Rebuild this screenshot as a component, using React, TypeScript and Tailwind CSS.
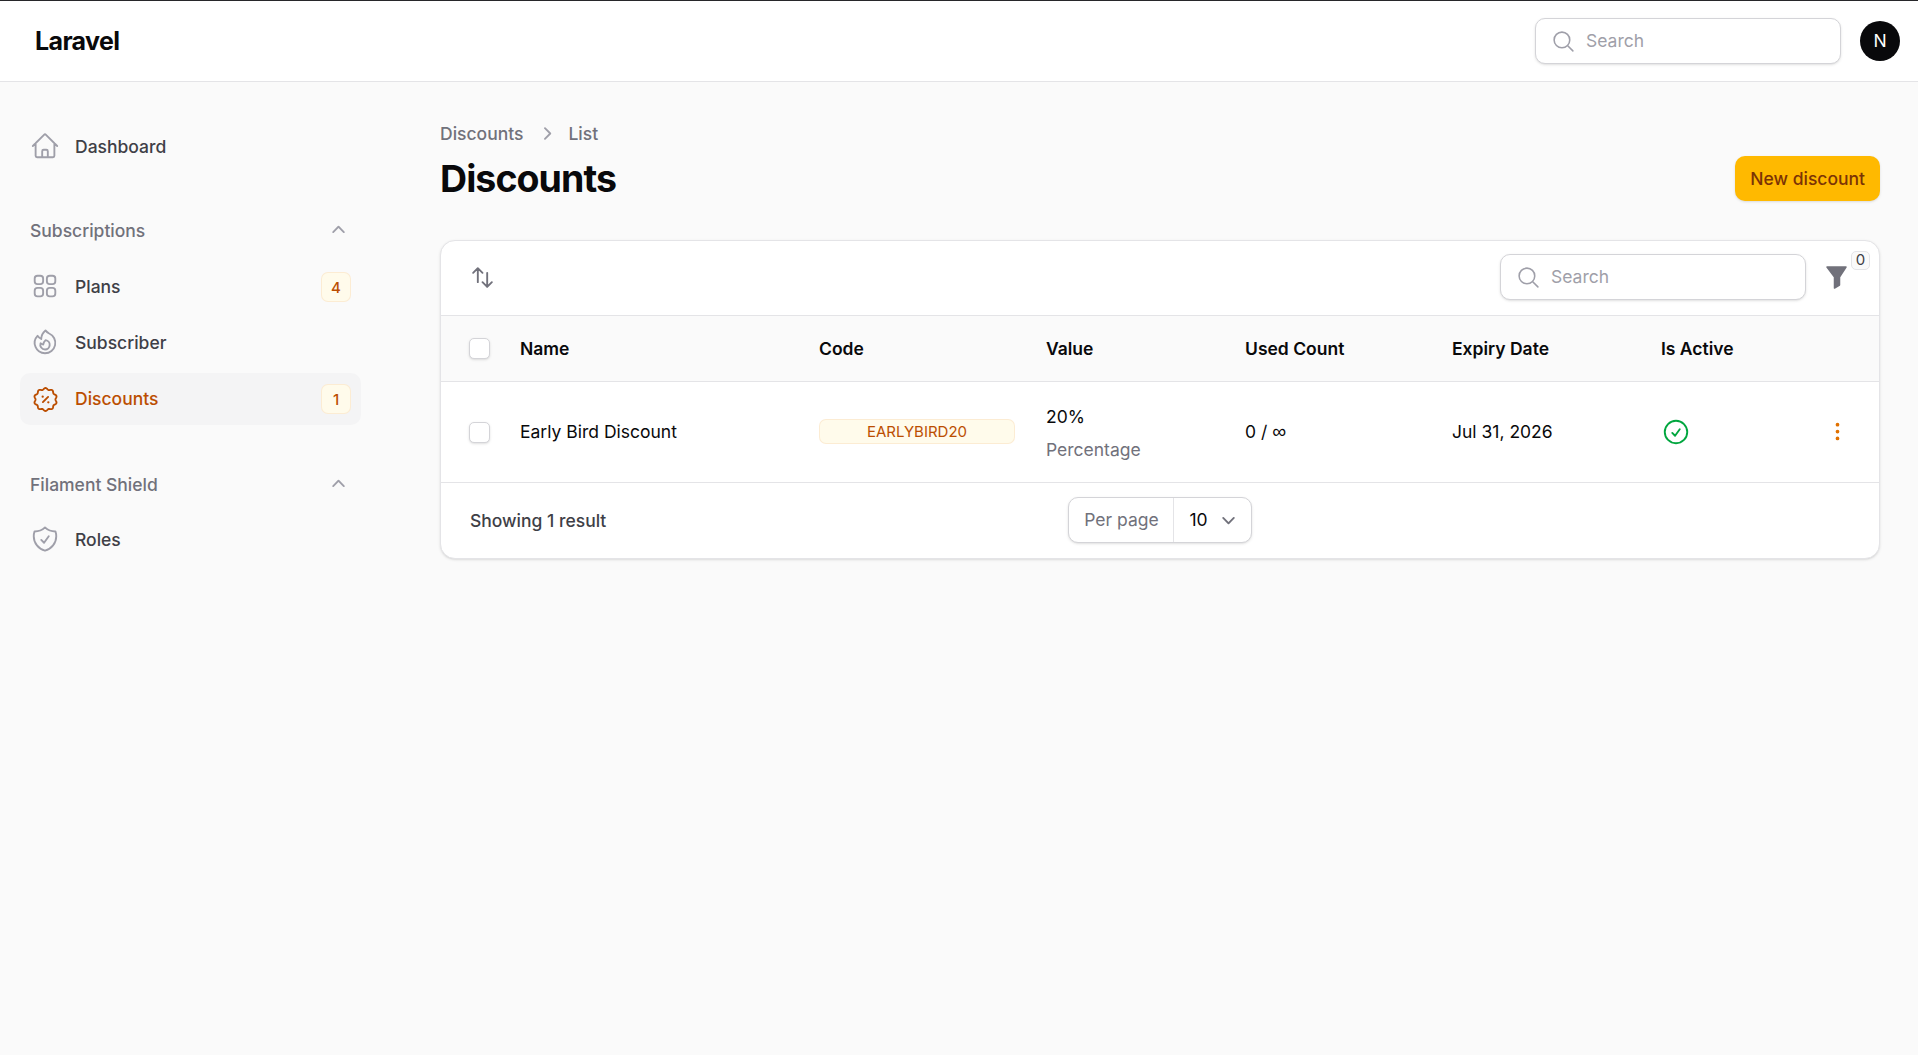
import {
  HiMiniChevronDown,
  HiMiniChevronRight,
  HiMiniChevronUp,
  HiMiniEllipsisVertical,
  HiOutlineArrowsUpDown,
  HiOutlineCheckCircle,
  HiOutlineFire,
  HiOutlineHome,
  HiOutlineMagnifyingGlass,
  HiOutlineShieldCheck,
  HiOutlineSquares2X2,
} from "react-icons/hi2";
import type { ReactNode } from "react";

// scalloped outline for the discount badge, lucide's one is too angular
const scallopPath = Array.from({ length: 120 }, (_, i) => {
  const t = (i / 120) * Math.PI * 2;
  const r = 10.3 + 0.75 * Math.cos(10 * t);
  return `${i === 0 ? "M" : "L"}${(12 + r * Math.sin(t)).toFixed(2)} ${(12 - r * Math.cos(t)).toFixed(2)}`;
}).join("") + "Z";

function DiscountIcon() {
  return (
    <svg viewBox="0 0 24 24" className="size-[25px]" fill="none" stroke="currentColor" strokeWidth={1.8} strokeLinecap="round">
      <path d={scallopPath} />
      <path d="M9.5 14.5l5-5" />
      <path d="M9.3 9.3h.01M14.7 14.7h.01" strokeWidth={2.2} />
    </svg>
  );
}

function NavItem({ icon, label, badge, active }: { icon: ReactNode; label: string; badge?: string; active?: boolean }) {
  return (
    <a
      className={`flex h-[52px] items-center gap-[15px] rounded-[10px] px-[10px] text-[17.5px] leading-[25px] font-medium ${
        active ? "bg-zinc-100 text-amber-700" : "text-zinc-700"
      }`}
    >
      <span className={`flex size-[30px] shrink-0 items-center justify-center ${active ? "text-amber-700" : "-translate-y-px text-zinc-400"}`}>{icon}</span>
      <span className="flex-1 -translate-y-px">{label}</span>
      {badge && (
        <span className="flex size-[30px] items-center justify-center rounded-[7px] border border-amber-600/10 bg-amber-50 text-[15px] font-medium text-amber-700">
          {badge}
        </span>
      )}
    </a>
  );
}

function GroupLabel({ label }: { label: string }) {
  return (
    <div className="mb-[18px] flex h-[25px] items-center justify-between px-[10px] text-[17.5px] leading-[25px] font-medium text-zinc-500">
      <span>{label}</span>
      <HiMiniChevronUp className="size-[25px] text-zinc-400" />
    </div>
  );
}

function SearchBox() {
  return (
    <div className="flex h-[46px] w-[306px] items-center gap-[10px] rounded-[10px] border border-zinc-300 bg-white pl-[15px] shadow-sm">
      <HiOutlineMagnifyingGlass className="size-[25px] text-zinc-400" />
      <span className="-translate-y-px text-[17.5px] leading-[25px] text-zinc-400">Search</span>
    </div>
  );
}

function Checkbox() {
  return <span className="block size-[21px] rounded-[5px] border border-zinc-300 bg-white shadow-sm" />;
}

export default function App() {
  return (
    <div className="min-h-screen bg-[#fafafa] font-['Inter',sans-serif]">
      <header className="flex h-[82px] items-center justify-between border-t border-b border-t-[#27272a] border-b-zinc-200 bg-white pr-[18px] pl-[35px]">
        <span className="text-[25px] leading-[30px] font-bold tracking-tight text-zinc-950">Laravel</span>
        <div className="flex items-center gap-[19px]">
          <SearchBox />
          <span className="flex size-[40px] items-center justify-center rounded-full bg-zinc-950 text-[17.5px] text-white">N</span>
        </div>
      </header>

      <div className="flex">
        <aside className="w-[400px] shrink-0 pt-[39px] pr-[39px] pl-[20px]">
          <NavItem icon={<HiOutlineHome className="size-[30px]" />} label="Dashboard" />
          <div className="mt-[45px]">
            <GroupLabel label="Subscriptions" />
            <div className="flex flex-col gap-[4px]">
              <NavItem icon={<HiOutlineSquares2X2 className="size-[30px]" />} label="Plans" badge="4" />
              <NavItem icon={<HiOutlineFire className="size-[30px]" />} label="Subscriber" />
              <NavItem active icon={<DiscountIcon />} label="Discounts" badge="1" />
            </div>
          </div>
          <div className="mt-[47px]">
            <GroupLabel label="Filament Shield" />
            <div className="-mt-px">
              <NavItem icon={<HiOutlineShieldCheck className="size-[30px]" />} label="Roles" />
            </div>
          </div>
        </aside>

        <main className="flex-1 pt-[39px] pr-[38px] pl-[40px]">
          <nav className="flex items-center text-[17.5px] leading-[25px] font-medium text-zinc-500">
            <span>Discounts</span>
            <HiMiniChevronRight className="mr-[9px] ml-[11px] size-[25px] text-zinc-400" />
            <span>List</span>
          </nav>
          <div className="mt-[10px] flex items-center justify-between">
            <h1 className="text-[37.5px] leading-[45px] font-bold tracking-tight text-zinc-950">Discounts</h1>
            <button className="flex h-[45px] items-center rounded-[10px] bg-amber-400 px-[15px] pt-[2px] text-[17.5px] font-medium text-amber-900 shadow-sm">
              New discount
            </button>
          </div>

          <section className="mt-[39px] rounded-[15px] border border-zinc-200 bg-white shadow-sm">
            <div className="flex h-[74px] items-center justify-between pr-[30px] pb-[2px] pl-[29px]">
              <HiOutlineArrowsUpDown className="size-[25px] text-zinc-500" strokeWidth={1.8} />
              <div className="flex items-center gap-[18px]">
                <SearchBox />
                <span className="relative flex size-[25px] items-center justify-center">
                  <svg viewBox="0 0 21 23" className="h-[23px] w-[21px] fill-zinc-500 stroke-zinc-500" strokeWidth={1.5} strokeLinejoin="round">
                    <path d="M1 1h19l-6.5 10v8l-5 3V11z" />
                  </svg>
                  <span className="absolute -top-[14px] -right-[21px] flex size-[19px] items-center justify-center rounded-[5px] border border-zinc-200 bg-zinc-50 text-[15px] text-zinc-700">
                    0
                  </span>
                </span>
              </div>
            </div>

            <table className="w-full table-fixed border-collapse text-left text-[17.5px] leading-[25px] text-zinc-950">
              <colgroup>
                <col className="w-[79px]" />
                <col className="w-[299px]" />
                <col className="w-[227px]" />
                <col className="w-[199px]" />
                <col className="w-[207px]" />
                <col className="w-[209px]" />
                <col className="w-[164px]" />
                <col />
              </colgroup>
              <thead>
                <tr className="h-[66px] border-y border-zinc-200 bg-[#fafafa]">
                  <th className="pl-[28px]"><Checkbox /></th>
                  <th className="font-semibold">Name</th>
                  <th className="font-semibold">Code</th>
                  <th className="font-semibold">Value</th>
                  <th className="font-semibold">Used Count</th>
                  <th className="font-semibold">Expiry Date</th>
                  <th className="font-semibold">Is Active</th>
                  <th />
                </tr>
              </thead>
              <tbody>
                <tr className="h-[101px] border-b border-zinc-200">
                  <td className="pl-[28px]"><Checkbox /></td>
                  <td className="pb-[2px]">Early Bird Discount</td>
                  <td className="pr-[31px] pb-[2px]">
                    <span className="flex h-[25px] items-center justify-center rounded-[7px] border border-amber-600/10 bg-amber-50 text-[15px] text-amber-700">
                      EARLYBIRD20
                    </span>
                  </td>
                  <td className="pt-[2px]">
                    <div>20%</div>
                    <div className="mt-[8px] text-zinc-500">Percentage</div>
                  </td>
                  <td className="pb-[2px]">0 / <span className="font-['Liberation_Sans',sans-serif] text-[19.5px] leading-[25px]">∞</span></td>
                  <td className="pb-[2px]">Jul 31, 2026</td>
                  <td><HiOutlineCheckCircle className="size-[30px] text-green-600" /></td>
                  <td className="pb-[1px]"><HiMiniEllipsisVertical className="size-[25px] text-amber-600" /></td>
                </tr>
              </tbody>
            </table>

            <div className="grid h-[75px] grid-cols-3 items-center pr-[28px] pb-[2px] pl-[29px]">
              <span className="translate-y-px text-[17.5px] leading-[25px] font-medium text-zinc-700">Showing 1 result</span>
              <div className="flex h-[46px] w-[184px] items-center justify-self-center rounded-[10px] border border-zinc-300 bg-white text-[17.5px] shadow-sm">
                <span className="flex h-full w-[105px] items-center justify-center border-r border-zinc-200 pt-[2px] text-zinc-500">Per page</span>
                <span className="pt-[2px] pl-[15px] text-zinc-950">10</span>
                <HiMiniChevronDown className="ml-[8px] size-[25px] text-zinc-500" />
              </div>
            </div>
          </section>
        </main>
      </div>
    </div>
  );
}
